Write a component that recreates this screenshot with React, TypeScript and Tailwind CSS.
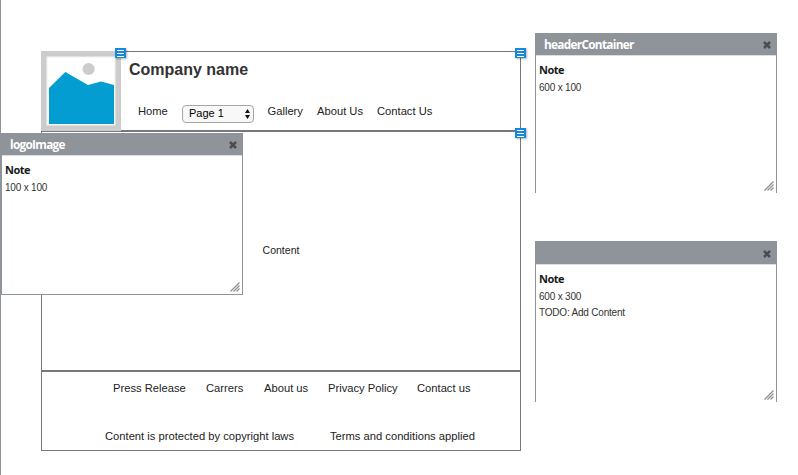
import React from "react";

type Label = { text: string; cell: string };

const footerLinks: Label[] = [
  { text: "Press Release", cell: "w-[93px]" },
  { text: "Carrers", cell: "w-[58px]" },
  { text: "About us", cell: "w-[64px]" },
  { text: "Privacy Policy", cell: "w-[89px]" },
  { text: "Contact us", cell: "w-[60px]" },
];

function Badge({ place }: { place: string }) {
  return (
    <div
      className={`absolute z-10 flex h-[10px] w-[11px] flex-col gap-[2px] bg-[#1588dc] px-[2px] pt-[2px] shadow-[1px_1px_2px_rgba(0,0,0,0.3)] ${place}`}
    >
      <i className="block h-px w-full bg-white" />
      <i className="block h-px w-full bg-white" />
      <i className="block h-px w-full bg-white" />
    </div>
  );
}

function NoteWindow({
  title = "",
  lines,
  place,
  bar,
}: {
  title?: string;
  lines: string[];
  place: string;
  bar: string;
}) {
  return (
    <section className={`absolute z-20 flex w-[242px] flex-col border-x border-[#8f939a] bg-white ${place}`}>
      <header className={`flex shrink-0 items-center justify-between bg-[#8f939a] pr-[5px] pl-2 ${bar}`}>
        <h2 className="font-['Open_Sans',sans-serif] text-[11.8px] leading-[20px] font-bold tracking-[-0.7px] text-white">
          {title}
        </h2>
        <svg className="mt-[2px] h-[8px] w-[8px]" viewBox="0 0 8 8">
          <path d="M1 1L7 7M7 1L1 7" stroke="#4b4c4e" strokeWidth="2.5" />
        </svg>
      </header>
      <div className="grow border-t border-[#dcdee0] px-[3px] pt-[6px]">
        <h3 className="font-['Open_Sans',sans-serif] text-[11px] leading-[16px] font-bold tracking-[-0.5px] text-[#1a1a1a]">
          Note
        </h3>
        {lines.map((line) => (
          <p key={line} className="pt-px text-[10px] leading-[15px] tracking-[-0.2px] text-[#333] first-of-type:pt-[2px]">
            {line}
          </p>
        ))}
      </div>
      <svg className="mr-[2px] mb-[2px] h-[10px] w-[10px] shrink-0 self-end" viewBox="0 0 10 10">
        <path d="M0.5 9.5L9.5 0.5M3.5 9.5L9.5 3.5M6.5 9.5L9.5 6.5" stroke="#909090" strokeWidth="1.3" fill="none" />
      </svg>
    </section>
  );
}

export default function App() {
  return (
    <main className="relative h-[475px] w-[798px] overflow-hidden border-l border-[#8f939a] bg-white pt-[51px] pl-10 font-['Liberation_Sans',Arial,sans-serif] text-[11.2px] text-[#222]">
      <div className="w-[480px]">
        <header className="flex h-20 border border-[#777]">
          <svg className="-mt-px -ml-px h-20 w-20 shrink-0" viewBox="0 0 80 80">
            <rect width="80" height="80" fill="#ccc" />
            <rect x="5.3" y="5.3" width="69.4" height="69.4" fill="#e8e8e8" />
            <rect x="6.3" y="6.3" width="67.4" height="67.4" fill="#fff" />
            <circle cx="47.6" cy="18" r="6.1" fill="#ccc" />
            <path d="M8 37L24.3 21L47 34L60 30.5L73 34V73H8Z" fill="#049dd2" />
          </svg>
          <div className="flex flex-col pl-2">
            <h1 className="pt-2 text-[16px] leading-[20px] font-bold text-[#333]">Company name</h1>
            <nav className="flex items-start pt-[22px] pl-[9px] leading-[18px]">
              <span className="w-[44px]">Home</span>
              <div className="mt-[3px] flex h-[18px] w-[72px] items-center justify-between rounded-[4px] border border-[#a6a6a6] bg-[#f8f8f8] pr-[3px] pl-[6px] text-[11px] text-black">
                <span className="pb-px leading-[15px]">Page 1</span>
                <svg className="h-[10px] w-[5px]" viewBox="0 0 5 10">
                  <path d="M0 4L2.5 0L5 4ZM0 6H5L2.5 10Z" fill="#111" />
                </svg>
              </div>
              <span className="ml-[13.5px] w-[49.5px]">Gallery</span>
              <span className="w-[60px]">About Us</span>
              <span>Contact Us</span>
            </nav>
          </div>
        </header>
        <section className="flex h-[240px] items-center justify-center border border-[#777] text-[10.5px]">
          Content
        </section>
        <footer className="flex h-20 flex-col border border-[#777] leading-[16px]">
          <div className="flex pt-2 pl-[71px]">
            {footerLinks.map((l) => (
              <span key={l.text} className={`whitespace-nowrap ${l.cell}`}>{l.text}</span>
            ))}
          </div>
          <div className="flex pt-8 pl-[63px]">
            <span className="w-[225px]">Content is protected by copyright laws</span>
            <span>Terms and conditions applied</span>
          </div>
        </footer>
      </div>

      <Badge place="top-[48px] left-[114px]" />
      <Badge place="top-[48px] left-[514px]" />
      <Badge place="top-[128px] left-[514px]" />

      <NoteWindow title="logoImage" lines={["100 x 100"]} place="top-[133px] left-0 h-[162px] border-b" bar="h-[22px]" />
      <NoteWindow title="headerContainer" lines={["600 x 100"]} place="top-[33px] left-[534px] h-[160px]" bar="h-[22px]" />
      <NoteWindow lines={["600 x 300", "TODO: Add Content"]} place="top-[241px] left-[534px] h-[161px]" bar="h-[23px]" />
    </main>
  );
}
